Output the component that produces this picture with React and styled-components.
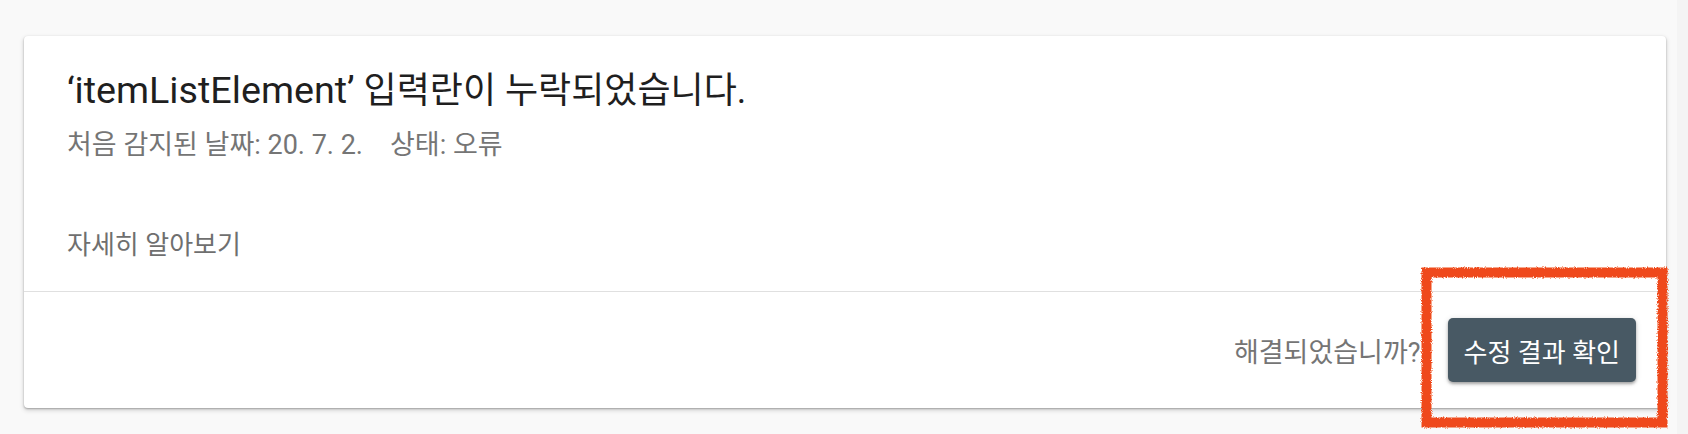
import React from "react";
import styled, { createGlobalStyle } from "styled-components";

const GlobalStyle = createGlobalStyle`
  html, body {
    margin: 0;
    padding: 0;
    background: #f9f9f9;
  }
  body {
    font-family: Roboto, "Noto Sans CJK KR", "Noto Sans", sans-serif;
    -webkit-font-smoothing: antialiased;
  }
`;

const Page = styled.div`
  display: flex;
  min-height: 434px;
`;

const Main = styled.main`
  flex: 1;
  padding: 36px 11px 26px 24px;
`;

const Gutter = styled.div`
  width: 11px;
  background: #f4f4f4;
`;

const Card = styled.section`
  background: #ffffff;
  border-radius: 4px;
  box-shadow: 0 1px 2px rgba(0, 0, 0, 0.28), 0 2px 4px 1px rgba(0, 0, 0, 0.12);
`;

const Body = styled.div`
  padding: 32px 43px 28px 43px;
  border-bottom: 1px solid #e0e0e0;
`;

const Title = styled.h1`
  margin: 0;
  font-size: 36px;
  line-height: 44px;
  font-weight: 400;
  color: #1f1f1f;
`;

const Term = styled.span`
  font-size: 37.7px;
`;

const Meta = styled.div`
  margin-top: 14px;
  display: flex;
  gap: 27px;
  font-size: 27px;
  line-height: 36px;
  color: #757575;
`;

const LearnMore = styled.a`
  display: block;
  margin-top: 64px;
  font-size: 26px;
  line-height: 36px;
  color: #6f6f6f;
  text-decoration: none;
`;

const Footer = styled.div`
  height: 116px;
  display: flex;
  align-items: center;
  justify-content: flex-end;
  gap: 27px;
  padding-right: 30px;
`;

const Question = styled.span`
  font-size: 27px;
  color: #757575;
`;

const ActionWrap = styled.div`
  position: relative;
`;

const Button = styled.button`
  height: 64px;
  padding: 0 16px;
  border: none;
  border-radius: 5px;
  background: #485964;
  color: #ffffff;
  font-family: inherit;
  font-size: 26px;
  box-shadow: 0 2px 3px rgba(0, 0, 0, 0.3), 0 1px 6px rgba(0, 0, 0, 0.12);
  cursor: pointer;
`;

const Annotation = styled.svg`
  position: absolute;
  top: -51px;
  right: -32px;
  width: 247px;
  height: 162px;
  pointer-events: none;
  overflow: visible;
`;

function HighlightBox() {
  return (
    <Annotation viewBox="0 0 247 162">
      <defs>
        <filter id="rough" x="-10%" y="-10%" width="120%" height="120%">
          <feTurbulence type="fractalNoise" baseFrequency="0.9" numOctaves="2" seed="3" result="n" />
          <feDisplacementMap in="SourceGraphic" in2="n" scale="4" xChannelSelector="R" yChannelSelector="G" />
        </filter>
      </defs>
      <rect
        x="5.5"
        y="5.5"
        width="236"
        height="150"
        fill="none"
        stroke="#ef4a1c"
        strokeWidth="10"
        filter="url(#rough)"
      />
    </Annotation>
  );
}

export default function App() {
  return (
    <>
      <GlobalStyle />
      <Page>
        <Main>
          <Card>
            <Body>
              <Title>
                <Term>‘itemListElement’</Term> 입력란이 누락되었습니다.
              </Title>
              <Meta>
                <span>처음 감지된 날짜: 20. 7. 2.</span>
                <span>상태: 오류</span>
              </Meta>
              <LearnMore href="#">자세히 알아보기</LearnMore>
            </Body>
            <Footer>
              <Question>해결되었습니까?</Question>
              <ActionWrap>
                <Button>수정 결과 확인</Button>
                <HighlightBox />
              </ActionWrap>
            </Footer>
          </Card>
        </Main>
        <Gutter />
      </Page>
    </>
  );
}
